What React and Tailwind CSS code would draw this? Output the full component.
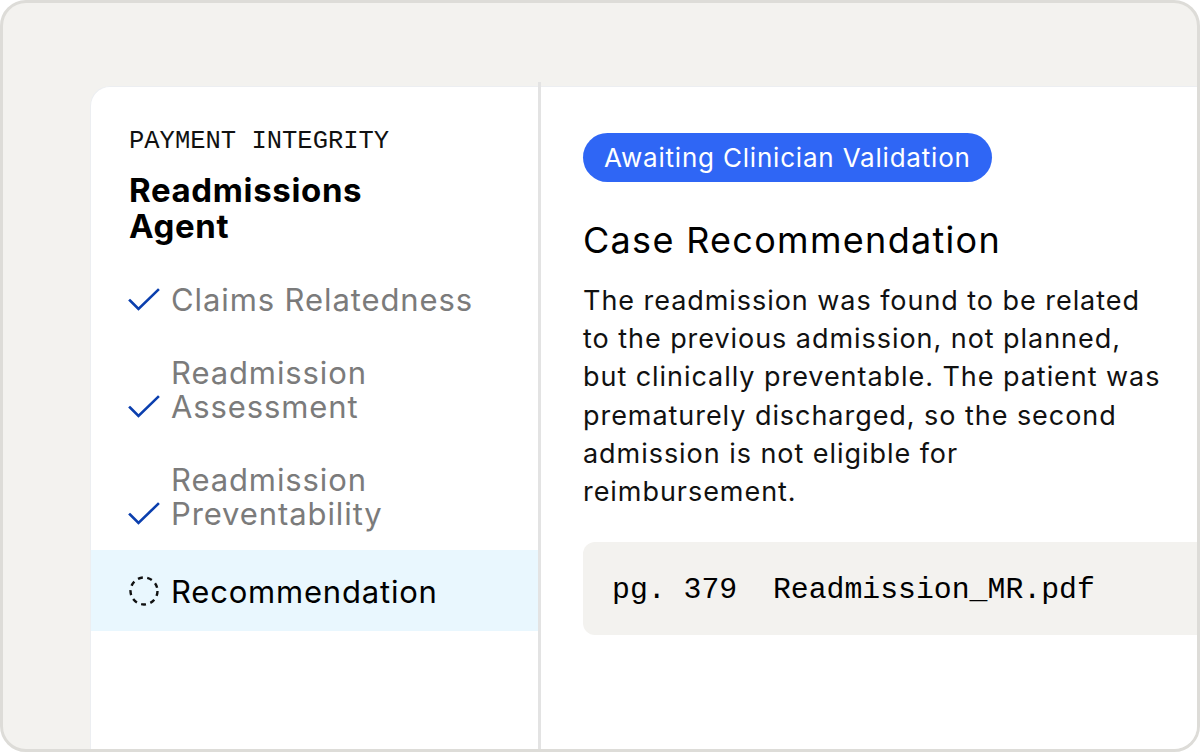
import React from "react";

const sans = { fontFamily: "Inter, 'Liberation Sans', sans-serif" };
const mono = { fontFamily: "'Liberation Mono', 'DejaVu Sans Mono', monospace" };

function Check() {
  return (
    <svg width="32" height="26" viewBox="0 0 32 26" fill="none" className="shrink-0">
      <path d="M2 13.5 L10.5 22 L30 3" stroke="#0b3fae" strokeWidth="2.6" strokeLinecap="square" />
    </svg>
  );
}

function DashedCircle() {
  return (
    <svg width="32" height="32" viewBox="0 0 32 32" fill="none" className="shrink-0">
      <circle cx="16" cy="16" r="13.5" stroke="#111" strokeWidth="2.4" strokeDasharray="5 4.5" />
    </svg>
  );
}

const steps = [
  ["Claims Relatedness"],
  ["Readmission", "Assessment"],
  ["Readmission", "Preventability"],
];

const para = [
  "The readmission was found to be related",
  "to the previous admission, not planned,",
  "but clinically preventable. The patient was",
  "prematurely discharged, so the second",
  "admission is not eligible for",
  "reimbursement.",
];

export default function App() {
  return (
    <div className="w-[1200px] h-[752px] bg-white" style={sans}>
      <div className="w-full h-full rounded-[26px] border-[3px] border-[#dddcd8] bg-[#f3f2ef] overflow-hidden flex flex-col pl-[87px] pt-[83px]">
        <div className="flex-1 flex bg-white rounded-tl-[20px] border-l border-t border-[#eceef1]">
          {/* left column */}
          <div className="w-[447px] flex flex-col pt-[40px]">
            <div className="pl-[38px]">
              <div className="text-[25.5px] leading-[30px] text-[#111]" style={mono}>PAYMENT INTEGRITY</div>
              <h1 className="mt-[15px] text-[33px] leading-[36px] font-bold text-black tracking-[0.65px]">
                <span className="block">Readmissions</span>
                <span className="block">Agent</span>
              </h1>
            </div>
            <div className="mt-[39px] flex flex-col gap-[39px] pl-[37px]">
              {steps.map((lines, i) => (
                <div key={i} className="flex items-end gap-[11px]">
                  <div className="pb-[4px]"><Check /></div>
                  <div className="text-[31px] leading-[34px] text-[#7b7b7b] tracking-[0.9px]">
                    {lines.map((l, j) => <div key={j}>{l}</div>)}
                  </div>
                </div>
              ))}
            </div>
            <div className="mt-[19px] h-[81px] bg-[#e9f7fe] flex items-center gap-[11px] pl-[37px]">
              <DashedCircle />
              <span className="text-[31px] leading-[34px] text-black tracking-[0.8px] pt-[3px]">Recommendation</span>
            </div>
          </div>
          {/* divider */}
          <div className="w-[3px] bg-[#e3e3e3] -mt-[5px]"></div>
          {/* right column */}
          <div className="flex-1 pl-[42px] pt-[46px] min-w-0">
            <span className="inline-flex items-center h-[49px] px-[21px] rounded-full bg-[#2f66f5] text-white text-[26px] tracking-[0.8px]">
              Awaiting Clinician Validation
            </span>
            <h2 className="mt-[36px] text-[36px] leading-[44px] text-black tracking-[1.3px]">Case Recommendation</h2>
            <p className="mt-[20px] text-[27px] leading-[38.2px] text-[#111] tracking-[0.95px] whitespace-nowrap">
              {para.map((l, i) => <span key={i} className="block">{l}</span>)}
            </p>
            <div className="mt-[31px] h-[93px] rounded-l-[12px] bg-[#f3f2ef] flex items-center pl-[29px] pt-[3px]">
              <span className="text-[29.8px] text-black whitespace-pre" style={mono}>pg. 379  Readmission_MR.pdf</span>
            </div>
          </div>
        </div>
      </div>
    </div>
  );
}
